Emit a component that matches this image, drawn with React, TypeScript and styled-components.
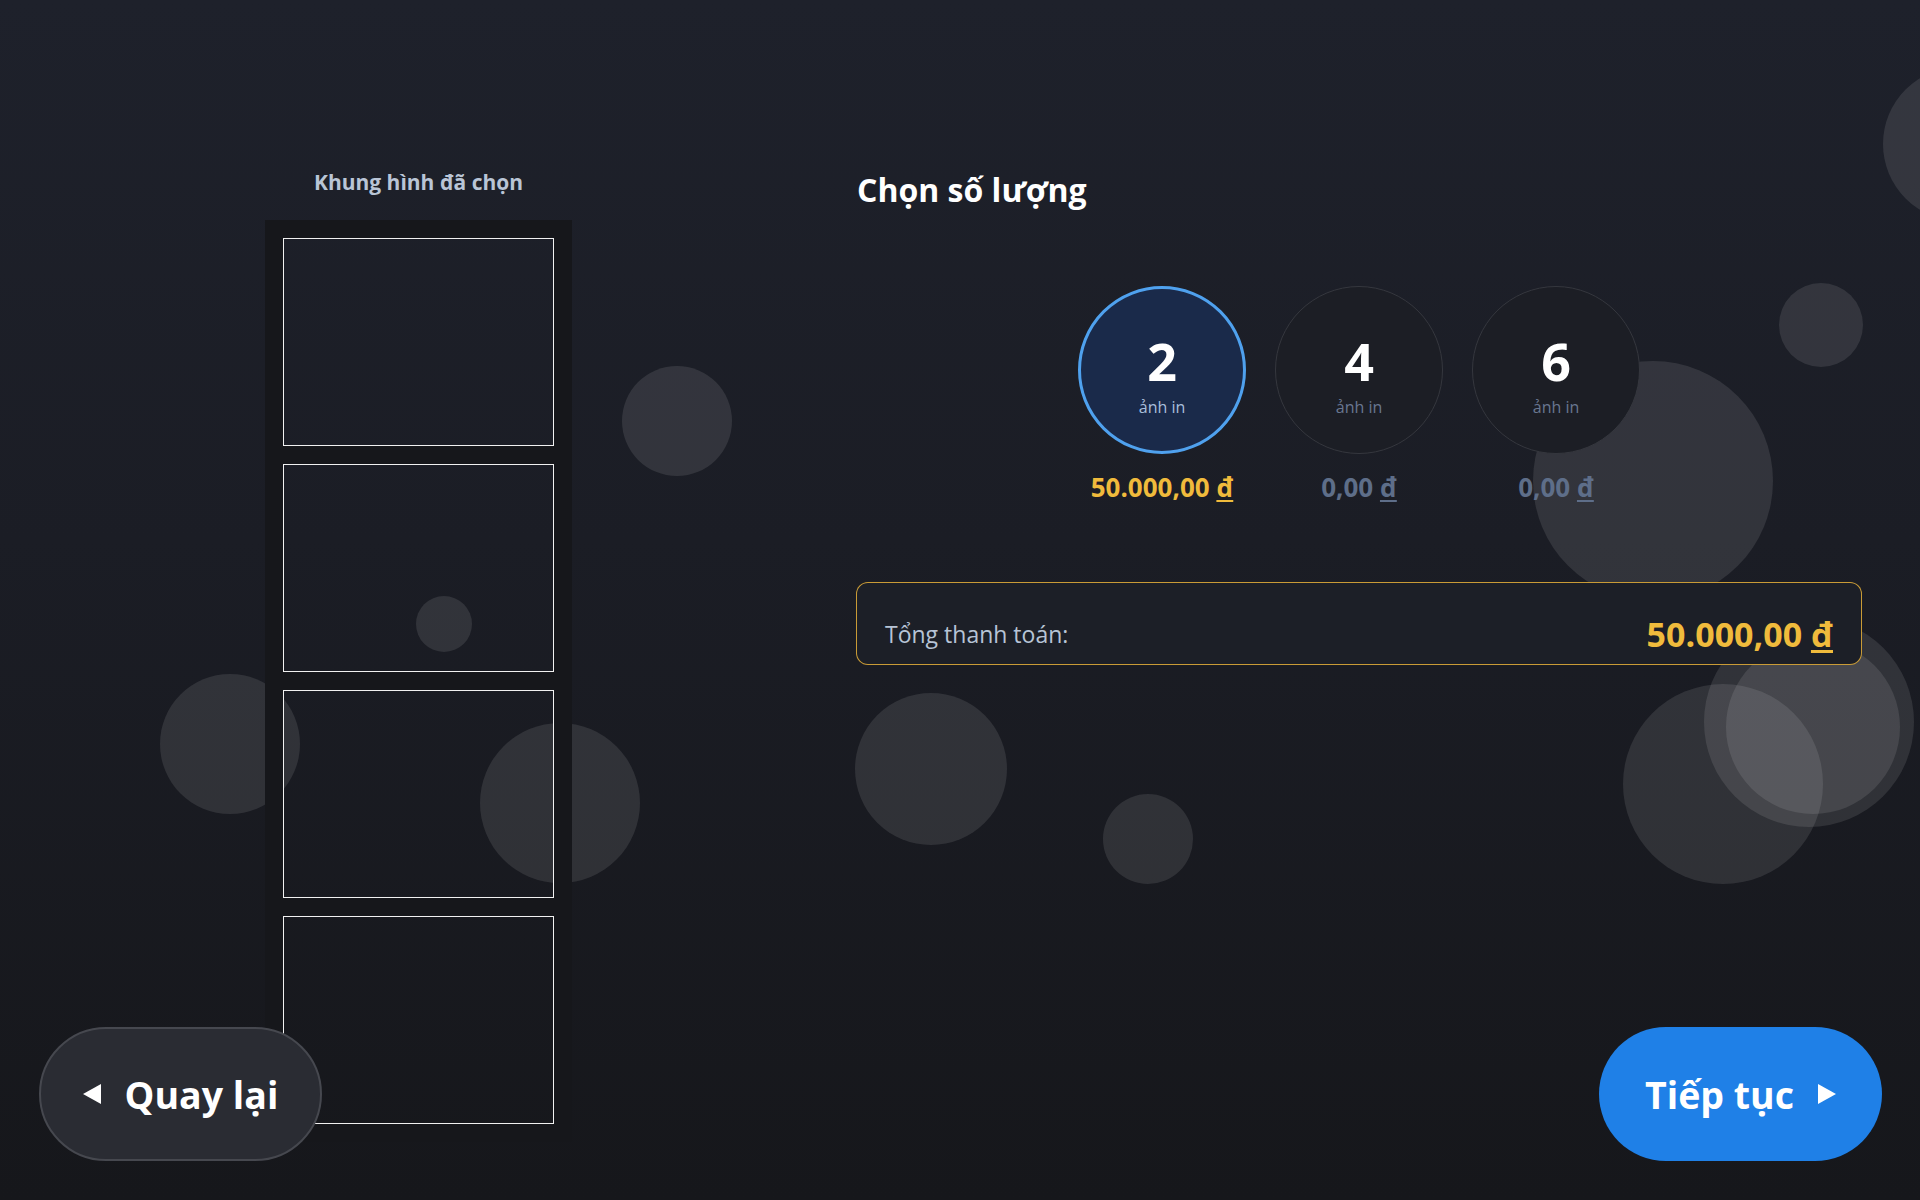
import styled, { createGlobalStyle } from "styled-components";

const GlobalStyle = createGlobalStyle`
  html, body {
    margin: 0;
    padding: 0;
  }
  body {
    background: #16171b;
    font-family: "Open Sans", "Noto Sans", sans-serif;
    color: #fff;
  }
`;

const Screen = styled.div`
  position: relative;
  min-height: 100vh;
  overflow: hidden;
  background: linear-gradient(180deg, #1e212b 0%, #1b1d25 45%, #16171b 100%);
`;

const BubbleLayer = styled.div`
  position: absolute;
  inset: 0;
  z-index: 0;
  pointer-events: none;
`;

const Bubble = styled.span<{ $x: number; $y: number; $r: number; $a?: number }>`
  position: absolute;
  left: ${(p) => p.$x - p.$r}px;
  top: ${(p) => p.$y - p.$r}px;
  width: ${(p) => p.$r * 2}px;
  height: ${(p) => p.$r * 2}px;
  border-radius: 50%;
  background: rgba(255, 255, 255, ${(p) => p.$a ?? 0.1});
`;

const Main = styled.main`
  position: relative;
  z-index: 1;
  display: flex;
  align-items: flex-start;
  gap: 284px;
  padding: 168px 58px 0 265px;
`;

const FrameColumn = styled.section`
  width: 307px;
  display: flex;
  flex-direction: column;
  align-items: center;
`;

const FrameTitle = styled.h3`
  margin: 0;
  font-size: 21px;
  line-height: 28px;
  font-weight: 700;
  color: #b9c5d6;
`;

const FrameStrip = styled.div`
  margin-top: 24px;
  padding: 18px;
  display: flex;
  flex-direction: column;
  gap: 18px;
`;

// transparent slot, the dark film band is its spread shadow
const FrameSlot = styled.div`
  width: 271px;
  height: 208px;
  box-sizing: border-box;
  border: 1px solid #f1f1f1;
  box-shadow: 0 0 0 18px #16171b;
`;

const QuantityColumn = styled.section`
  width: 1006px;
  display: flex;
  flex-direction: column;
`;

const Heading = styled.h2`
  margin: 2px 0 0 1px;
  font-size: 32px;
  line-height: 40px;
  font-weight: 700;
  color: #fff;
`;

const OptionRow = styled.div`
  margin-top: 76px;
  display: flex;
  justify-content: center;
  gap: 29px;
`;

const Option = styled.div`
  width: 168px;
  display: flex;
  flex-direction: column;
  align-items: center;
  cursor: pointer;
`;

const OptionCircle = styled.div<{ $active: boolean }>`
  width: 168px;
  height: 168px;
  box-sizing: border-box;
  padding-top: 18px;
  border-radius: 50%;
  border: ${(p) => (p.$active ? "3px solid #4fa1ee" : "1px solid #35373e")};
  background: ${(p) => (p.$active ? "#1a2a4a" : "#1c1e25")};
  display: flex;
  flex-direction: column;
  align-items: center;
  justify-content: center;
`;

const OptionCount = styled.span`
  font-size: 52px;
  line-height: 40px;
  font-weight: 700;
  color: #fff;
`;

const OptionUnit = styled.span<{ $active: boolean }>`
  margin-top: 16px;
  font-size: 16px;
  line-height: 20px;
  color: ${(p) => (p.$active ? "#a9bedb" : "#697690")};
`;

const OptionPrice = styled.div<{ $active: boolean }>`
  margin-top: 16px;
  font-size: 26px;
  line-height: 34px;
  font-weight: 700;
  color: ${(p) => (p.$active ? "#f0bb3c" : "#5e6e89")};
`;

const Currency = styled.span`
  text-decoration: underline;
  text-underline-offset: 3px;
`;

const TotalBar = styled.div`
  margin-top: 78px;
  height: 83px;
  box-sizing: border-box;
  padding: 20px 28px 0;
  border: 1px solid rgba(232, 178, 58, 0.85);
  border-radius: 12px;
  background: #1c1f27;
  display: flex;
  justify-content: space-between;
  align-items: center;
`;

const TotalLabel = styled.span`
  font-size: 23px;
  line-height: 30px;
  color: #b7c4d6;
`;

const TotalValue = styled.span`
  font-size: 34px;
  line-height: 40px;
  font-weight: 700;
  color: #f0bb3c;
`;

const Footer = styled.footer`
  position: absolute;
  left: 39px;
  right: 38px;
  bottom: 39px;
  z-index: 2;
  display: flex;
  justify-content: space-between;
`;

const NavButton = styled.button<{ $primary?: boolean }>`
  width: 283px;
  height: 134px;
  box-sizing: border-box;
  padding: 0;
  border-radius: 67px;
  border: ${(p) => (p.$primary ? "none" : "2px solid #46484f")};
  background: ${(p) => (p.$primary ? "#1f80e7" : "#2a2c33")};
  display: flex;
  align-items: center;
  justify-content: center;
  gap: 24px;
  font-family: inherit;
  font-size: 37.5px;
  font-weight: 700;
  color: #fff;
  cursor: pointer;
`;

const Arrow = ({ dir }: { dir: "left" | "right" }) => (
  <svg width="18" height="20" viewBox="0 0 18 20">
    <polygon
      points={dir === "left" ? "18,0 18,20 0,10" : "0,0 0,20 18,10"}
      fill="#fff"
    />
  </svg>
);

const bubbles = [
  { x: 677, y: 421, r: 55 },
  { x: 444, y: 624, r: 28 },
  { x: 230, y: 744, r: 70 },
  { x: 560, y: 803, r: 80 },
  { x: 931, y: 769, r: 76 },
  { x: 1148, y: 839, r: 45 },
  { x: 1653, y: 481, r: 120 },
  { x: 1821, y: 325, r: 42 },
  { x: 1960, y: 144, r: 77 },
  { x: 1723, y: 784, r: 100 },
  { x: 1809, y: 722, r: 105 },
  { x: 1813, y: 727, r: 87 },
];

const options = [
  { count: 2, price: "50.000,00", active: true },
  { count: 4, price: "0,00", active: false },
  { count: 6, price: "0,00", active: false },
];

export default function App() {
  return (
    <>
      <GlobalStyle />
      <Screen>
        <BubbleLayer>
          {bubbles.map((b, i) => (
            <Bubble key={i} $x={b.x} $y={b.y} $r={b.r} />
          ))}
        </BubbleLayer>

        <Main>
          <FrameColumn>
            <FrameTitle>Khung hình đã chọn</FrameTitle>
            <FrameStrip>
              <FrameSlot />
              <FrameSlot />
              <FrameSlot />
              <FrameSlot />
            </FrameStrip>
          </FrameColumn>

          <QuantityColumn>
            <Heading>Chọn số lượng</Heading>
            <OptionRow>
              {options.map((o) => (
                <Option key={o.count}>
                  <OptionCircle $active={o.active}>
                    <OptionCount>{o.count}</OptionCount>
                    <OptionUnit $active={o.active}>ảnh in</OptionUnit>
                  </OptionCircle>
                  <OptionPrice $active={o.active}>
                    {o.price} <Currency>đ</Currency>
                  </OptionPrice>
                </Option>
              ))}
            </OptionRow>
            <TotalBar>
              <TotalLabel>Tổng thanh toán:</TotalLabel>
              <TotalValue>
                50.000,00 <Currency>đ</Currency>
              </TotalValue>
            </TotalBar>
          </QuantityColumn>
        </Main>

        <Footer>
          <NavButton>
            <Arrow dir="left" />
            Quay lại
          </NavButton>
          <NavButton $primary>
            Tiếp tục
            <Arrow dir="right" />
          </NavButton>
        </Footer>
      </Screen>
    </>
  );
}
